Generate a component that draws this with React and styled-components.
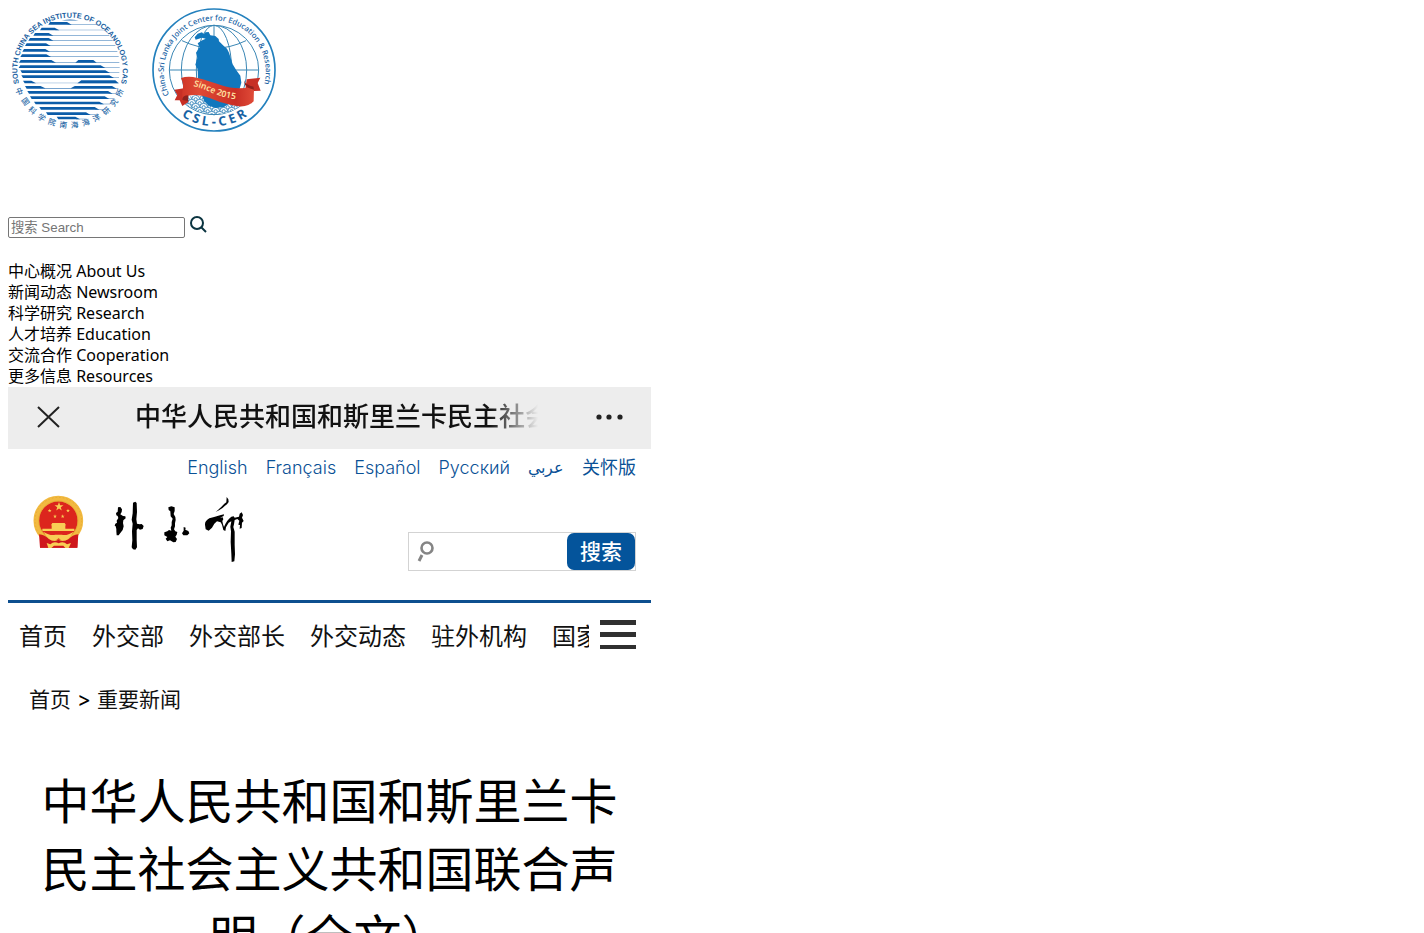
import React from "react";
import styled, { createGlobalStyle } from "styled-components";

const GlobalStyle = createGlobalStyle`
  * { box-sizing: border-box; }
  html { scrollbar-width: none; }
  body {
    margin: 8px;
    background: #fff;
    color: #000;
    font: 16px/21px "Noto Sans", "Noto Sans CJK SC", sans-serif;
  }
`;

const cjk = `"Inter", "Noto Sans CJK SC", sans-serif`;

const Logos = styled.header`
  display: flex;
  gap: 20px;
  height: 208px;
  svg { width: 124px; height: 124px; }
`;

const SiteSearch = styled.form`
  display: flex;
  align-items: flex-start;
  gap: 5px;
  height: 45px;
`;

const SiteInput = styled.input`
  width: 177px;
  height: 21px;
  margin: 1px 0 0;
  padding: 1px 2px;
  border: 1px solid #767676;
  border-radius: 2px;
  font-family: "Liberation Sans", "Noto Sans CJK SC", sans-serif;
  &::placeholder { color: #757575; opacity: 1; }
`;

const IconButton = styled.button`
  display: block;
  padding: 0;
  border: 0;
  background: none;
  line-height: 0;
  cursor: pointer;
`;

const Menu = styled.ul`
  margin: 0;
  padding: 0;
  list-style: none;
  a { color: inherit; text-decoration: none; }
`;

const Article = styled.article`
  max-width: 643px;
  font-family: ${cjk};
`;

const TitleBar = styled.div`
  display: flex;
  align-items: center;
  height: 62px;
  padding: 0 28px 3px;
  background: #ededed;
  color: #111;
`;

const BarTitle = styled.div`
  width: 403px;
  margin: 0 auto 0 74px;
  overflow: hidden;
  white-space: nowrap;
  font-size: 26px;
  font-weight: 500;
  line-height: 42px;
  mask-image: linear-gradient(to right, #000 88%, transparent 100%);
`;

const Languages = styled.nav`
  display: flex;
  justify-content: flex-end;
  gap: 18px;
  padding: 7px 15px 0;
  height: 46px;
  font-size: 18px;
  font-weight: 300;
  line-height: 24px;
  a { color: #0a5196; text-decoration: none; }
  a:lang(ar) { font-family: "DejaVu Sans", sans-serif; font-size: 16px; }
  a:lang(zh) { font-weight: 400; }
`;

const Masthead = styled.div`
  display: flex;
  align-items: flex-start;
  height: 108px;
  padding: 0 15px 0 24px;
  border-bottom: 3px solid #0d4f8f;
`;

const Calligraphy = styled.svg`
  width: 132px;
  height: 69px;
  margin-left: 29px;
`;

const Emblem = styled.svg`
  width: 52px;
  height: 54px;
`;

const SearchBox = styled.form`
  display: flex;
  align-items: center;
  width: 228px;
  height: 39px;
  margin: 37px 0 0 auto;
  padding: 0 0 0 8px;
  border: 1px solid #d3d3d3;
`;

const SearchField = styled.input`
  flex: 1;
  min-width: 0;
  height: 32px;
  border: 0;
  outline: 0;
  font: 18px ${cjk};
`;

const SearchButton = styled.button`
  width: 68px;
  height: 37px;
  padding: 0;
  border: 0;
  border-radius: 7px;
  background: #04549b;
  color: #fff;
  font: 500 21px/36px ${cjk};
`;

const MainNav = styled.nav`
  display: flex;
  align-items: center;
  height: 63px;
  padding: 0 15px 0 11px;
`;

const NavItems = styled.div`
  display: flex;
  flex: 1;
  min-width: 0;
  gap: 25px;
  margin-right: 11px;
  padding-top: 4px;
  overflow: hidden;
  white-space: nowrap;
  font-size: 24px;
  line-height: 36px;
  a { color: #111; text-decoration: none; }
`;

const Breadcrumb = styled.nav`
  display: flex;
  gap: 6px;
  padding: 18px 21px 0;
  font-size: 21px;
  line-height: 32px;
  a { color: #111; text-decoration: none; }
`;

const Headline = styled.h1`
  margin: 52px 32px 0;
  text-align: center;
  font-size: 48px;
  font-weight: 400;
  line-height: 68px;
`;

/* Each stripe: centre height, left end, end of the thick part, end of the thin tail. */
const stripes = [
  [70, 150, 215, 290], [87, 125, 178, 316], [103, 105, 160, 328],
  [118, 90, 160, 338], [134, 80, 152, 346], [151, 72, 150, 352],
  [167, 66, 153, 356], [184, 62, 168, 358], [200, 61, 316, 359],
  [215, 61, 330, 358], [230, 64, 342, 357], [246, 69, 108, 356],
  [262, 75, 350, 353], [277, 82, 338, 348], [293, 90, 328, 340],
  [309, 102, 312, 330], [325, 118, 298, 315], [341, 138, 272, 296],
  [354, 170, 240, 260],
];

function InstituteLogo() {
  return (
    <svg viewBox="24 24 372 372" role="img" aria-label="South China Sea Institute of Oceanology CAS">
      <defs>
        <path id="scs-top" d="M58 254 A158 158 0 1 1 362 254" />
      </defs>
      {stripes.map(([y, x, end, tail]) => (
        <g key={y} fill="#0b5ca8">
          <path d={`M${x} ${y - 4} H${end - 14} L${end} ${y + 4} H${x + (y > 210 ? 5 : -5)} Z`} />
          <path d={`M${end - 12} ${y + 2} H${tail} V${y + 4} H${end - 12} Z`} opacity="0.6" />
        </g>
      ))}
      <g fill="#0b5ca8">
        <path d="M185 62 Q210 53 236 62 Z" opacity="0.6" />
        <path d="M226 188 L235 180 H280 L290 188 Z" />
        <path d="M232 250 L244 241 H346 L356 250 Z" />
      </g>
      <path d="M110 253 L136 265 H212 L234 253 L224 251 H116 Z" fill="#fff" />
      <text fill="#1b5f9f" fontFamily="Liberation Sans, sans-serif" fontWeight="700" fontSize="22">
        <textPath href="#scs-top" startOffset="50%" textAnchor="middle">SOUTH CHINA SEA INSTITUTE OF OCEANOLOGY CAS</textPath>
      </text>
      <g fill="#2a6ba8" fontFamily="Noto Sans CJK SC, sans-serif" fontWeight="500" fontSize="23" textAnchor="middle">
        {[["中", 57, 274, 70], ["国", 76, 305, 55], ["科", 97, 332, 42], ["学", 125, 353, 29], ["院", 156, 367, 17], ["南", 190, 375, 6], ["海", 224, 375, -5], ["海", 258, 368, -17], ["洋", 290, 354, -29], ["研", 319, 333, -42], ["究", 342, 308, -54], ["所", 359, 278, -68]].map(([c, x, y, r], i) => (
          <text key={i} transform={`translate(${x} ${y}) rotate(${r})`} y="8">{c}</text>
        ))}
      </g>
    </svg>
  );
}

function CenterLogo() {
  return (
    <svg viewBox="21 24 372 372" role="img" aria-label="China-Sri Lanka Joint Center for Education and Research">
      <defs>
        <path id="csl-top" d="M73 284 A153 153 0 1 1 352 270" />
        <path id="csl-bottom" d="M96 338 A176 176 0 0 0 320 338" />
        <path id="csl-ribbon" d="M145 258 Q174 266 202 279 T284 300" />
        <linearGradient id="csl-red" x1="0" x2="1">
          <stop offset="0" stopColor="#cf3527" />
          <stop offset="0.25" stopColor="#df4935" />
          <stop offset="0.75" stopColor="#c92f25" />
          <stop offset="1" stopColor="#e04b38" />
        </linearGradient>
        <clipPath id="csl-waves"><path d="M112 300 Q160 275 190 290 L300 304 Q265 342 207 342 Q150 340 112 300 Z" /></clipPath>
      </defs>
      <circle cx="207" cy="210" r="183" fill="#fff" stroke="#2380bd" strokeWidth="5" />
      <g fill="none" stroke="#3b87b5" strokeWidth="3">
        <circle cx="207" cy="210" r="134" />
        <path d="M73 210 H341 M207 76 V344 M111 122 Q207 168 303 122" />
        <ellipse cx="207" cy="210" rx="98" ry="134" />
        <ellipse cx="207" cy="210" rx="53" ry="134" />
      </g>
      <path fill="#1177bd" d="M149 112 L158 101 L171 97 L176 103 L181 97 L191 96 L196 106 L211 108 L221 117 L222 124 L234 136 L246 146 L252 158 L257 174 L263 193 L274 211 L286 227 L289 248 L280 280 L262 310 L230 326 L202 324 L181 309 L166 277 L159 240 L158 208 L151 194 L157 174 L153 158 L164 142 L158 130 L172 121 L182 116 L171 113 L152 119 Z" />
      <g clipPath="url(#csl-waves)">
        <path d="M100 270 H200 L175 300 L190 350 H100 Z" fill="#fff" />
        <g fill="none" stroke="#408bbd" strokeWidth="3">
          {[298, 310, 322, 334, 346].flatMap((y, row) =>
            Array.from({ length: 10 }, (_, i) => 104 + i * 24 + (row % 2) * 12).map((x) => (
              <g key={`${x}-${y}`}>
                <circle cx={x} cy={y} r="12" fill="#fff" />
                <circle cx={x} cy={y} r="5" />
              </g>
            ))
          )}
        </g>
        <path d="M168 280 L178 304 L192 317 L212 324 L236 321 L262 306 L280 296 V270 Z" fill="#1177bd" />
      </g>
      <path d="M88 269 L122 264 L130 306 L112 318 L104 301 L89 301 L97 285 Z M305 238 L346 233 L338 249 L347 272 L325 273 L320 310 L297 300 Z" fill="#c72f25" />
      <path d="M108 234 Q130 226 158 234 Q200 245 229 256 Q269 270 327 261 L326 304 Q307 326 262 316 Q224 308 194 294 Q157 279 126 288 Q109 292 111 317 L112 274 Q118 255 108 234 Z" fill="url(#csl-red)" />
      <path d="M297 241 Q302 256 326 260 L327 269 Q306 264 300 254 Z M112 300 Q111 286 130 286 L130 303 Z" fill="#8e211d" />
      <g fill="#1762a4" fontFamily="Noto Sans, sans-serif" fontWeight="500">
        <text fontSize="23"><textPath href="#csl-top">China-Sri Lanka Joint Center for Education &amp; Research</textPath></text>
        <text fontSize="38" fontWeight="700"><textPath href="#csl-bottom" startOffset="50%" textAnchor="middle">C S L - C E R</textPath></text>
      </g>
      <text fill="#ffe0a0" fontFamily="Noto Sans, sans-serif" fontWeight="600" fontSize="26"><textPath href="#csl-ribbon">Since 2015</textPath></text>
    </svg>
  );
}

const starPoints = (cx, cy, r) =>
  Array.from({ length: 10 }, (_, i) => {
    const a = (-90 + i * 36) * Math.PI / 180;
    const d = i % 2 ? r * 0.4 : r;
    return `${cx + d * Math.cos(a)},${cy + d * Math.sin(a)}`;
  }).join(" ");

function NationalEmblem() {
  return (
    <Emblem viewBox="36 30 156 162" role="img" aria-label="国徽">
      <path d="M62 138 L60 188 H172 L173 138 Z" fill="#cf171c" />
      <circle cx="115" cy="107" r="66" fill="#dc251d" stroke="#f2ba40" strokeWidth="17" />
      <g fill="none" stroke="#d99b2b" strokeWidth="2" opacity="0.7">
        <circle cx="115" cy="107" r="70" strokeDasharray="5 6" />
        <circle cx="115" cy="107" r="59" />
      </g>
      <path d="M57 148 Q75 150 87 162 Q102 172 115 164 Q130 172 146 162 Q157 150 175 148 L172 188 H60 Z" fill="#cf171c" />
      <g fill="#f8ce55">
        <polygon points={starPoints(117, 65, 14)} />
        <polygon points={starPoints(89, 77, 6)} />
        <polygon points={starPoints(144, 77, 6)} />
        <polygon points={starPoints(105, 94, 6)} />
        <polygon points={starPoints(128, 94, 6)} />
        <path d="M97 114 H134 L138 121 H93 Z M95 121 H136 V131 H163 V138 H67 V131 H95 Z" />
        <path d="M70 140 Q92 154 106 149 H125 Q140 154 160 140 Q146 168 126 167 L116 160 L105 167 Q86 168 70 140 Z" />
        <path d="M80 174 L91 178 Q102 168 116 175 Q130 168 141 178 L153 174 L146 189 H136 L130 182 H102 L94 189 H85 Z" />
      </g>
    </Emblem>
  );
}

function MinistryName() {
  return (
    <Calligraphy viewBox="24 30 396 207" role="img" aria-label="外交部">
      <path d="M39 67 L46 66 L51 73 L50 81 L46 88 L54 93 L61 94 L62 100 L55 106 L54 114 L56 124 L53 135 L46 144 L41 151 L35 151 L34 139 L34 132 L32 124 L29 122 L31 116 L36 113 L35 107 L40 99 L38 93 L34 91 L33 84 L38 80 Z" />
      <path d="M84 53 L91 50 L95 54 L96 81 L94 103 L96 116 L104 118 L110 117 L116 123 L113 132 L105 134 L99 130 L95 135 L95 164 L96 187 L91 194 L84 193 L80 187 L82 166 L81 139 L83 116 L80 104 L83 85 Z" />
      <path d="M190 67 L199 64 L209 67 L209 78 L206 87 L211 96 L212 105 L210 115 L210 124 L207 133 L211 139 L217 141 L215 149 L211 155 L216 162 L212 171 L205 172 L195 166 L187 169 L182 161 L187 156 L178 151 L178 142 L187 139 L192 135 L199 137 L197 128 L200 121 L200 111 L203 101 L197 94 L196 79 L191 75 Z" />
      <path d="M236 126 L242 128 L241 134 L250 138 L253 145 L247 151 L235 151 L231 145 L236 137 Z" />
      <path d="M365 36 L370 43 L371 51 L366 58 L360 62 Q351 72 332 81 Q350 65 358 56 L364 52 Z" />
      <path d="M300 119 Q299 108 313 100 Q331 96 345 91 L357 88 L356 93 L345 98 L353 97 L355 103 L352 108 L354 118 L357 126 Q365 105 379 95 L386 94 L389 98 L402 95 L404 86 L410 82 L414 90 L411 98 L416 108 L411 113 L410 129 L404 131 L405 120 L400 119 L403 107 L397 102 L389 105 L387 118 L385 126 L389 140 L389 179 L390 208 L388 229 L380 231 L379 206 L377 171 L378 139 L376 125 L379 109 L371 113 L363 127 L361 138 L355 135 L351 119 L347 112 L336 109 L328 116 L321 128 L311 137 L302 133 Z" />
    </Calligraphy>
  );
}

const languages = [
  ["en", "English"], ["fr", "Français"], ["es", "Español"],
  ["ru", "Русский"], ["ar", "عربي"], ["zh", "关怀版"],
];

export default function App() {
  return (
    <>
      <GlobalStyle />
      <Logos>
        <InstituteLogo />
        <CenterLogo />
      </Logos>
      <SiteSearch onSubmit={(e) => e.preventDefault()}>
        <SiteInput aria-label="搜索 Search" placeholder="搜索 Search" />
        <IconButton aria-label="Search">
          <svg width="17" height="17" viewBox="0 0 17 17" fill="none" stroke="#0b3440" strokeWidth="2">
            <circle cx="7" cy="7" r="6" />
            <path d="M11 11 L16 16" />
          </svg>
        </IconButton>
      </SiteSearch>
      <Menu>
        {["中心概况 About Us", "新闻动态 Newsroom", "科学研究 Research", "人才培养 Education", "交流合作 Cooperation", "更多信息 Resources"].map((t) => (
          <li key={t}><a href="#">{t}</a></li>
        ))}
      </Menu>
      <Article>
        <TitleBar>
          <IconButton aria-label="关闭">
            <svg width="25" height="24" viewBox="0 0 25 24" fill="none" stroke="#222" strokeWidth="2">
              <path d="M2 2 L23 22 M23 2 L2 22" />
            </svg>
          </IconButton>
          <BarTitle>中华人民共和国和斯里兰卡民主社会</BarTitle>
          <IconButton aria-label="更多">
            <svg width="28" height="6" viewBox="0 0 28 6" fill="#222">
              <circle cx="4" cy="3" r="2.6" /><circle cx="14" cy="3" r="2.6" /><circle cx="25" cy="3" r="2.6" />
            </svg>
          </IconButton>
        </TitleBar>
        <Languages aria-label="Languages">
          {languages.map(([code, name]) => <a key={code} lang={code} href="#">{name}</a>)}
        </Languages>
        <Masthead>
          <NationalEmblem />
          <MinistryName />
          <SearchBox onSubmit={(e) => e.preventDefault()}>
            <svg width="18" height="22" viewBox="0 0 18 22" fill="none" stroke="#858585">
              <circle cx="10" cy="7" r="5.5" strokeWidth="2.6" />
              <path d="M5 14 L2 20" strokeWidth="3" />
            </svg>
            <SearchField aria-label="搜索" />
            <SearchButton>搜索</SearchButton>
          </SearchBox>
        </Masthead>
        <MainNav>
          <NavItems>
            {["首页", "外交部", "外交部长", "外交动态", "驻外机构", "国家"].map((t) => <a key={t} href="#">{t}</a>)}
          </NavItems>
          <IconButton aria-label="菜单">
            <svg width="36" height="30" viewBox="0 0 36 30" fill="#303030">
              <path d="M0 0 H36 V5 H0 Z M0 12 H36 V17 H0 Z M0 25 H36 V29 H0 Z" />
            </svg>
          </IconButton>
        </MainNav>
        <Breadcrumb aria-label="Breadcrumb">
          <a href="#">首页</a><span>&gt;</span><a href="#">重要新闻</a>
        </Breadcrumb>
        <Headline>中华人民共和国和斯里兰卡民主社会主义共和国联合声明（全文）</Headline>
      </Article>
    </>
  );
}
